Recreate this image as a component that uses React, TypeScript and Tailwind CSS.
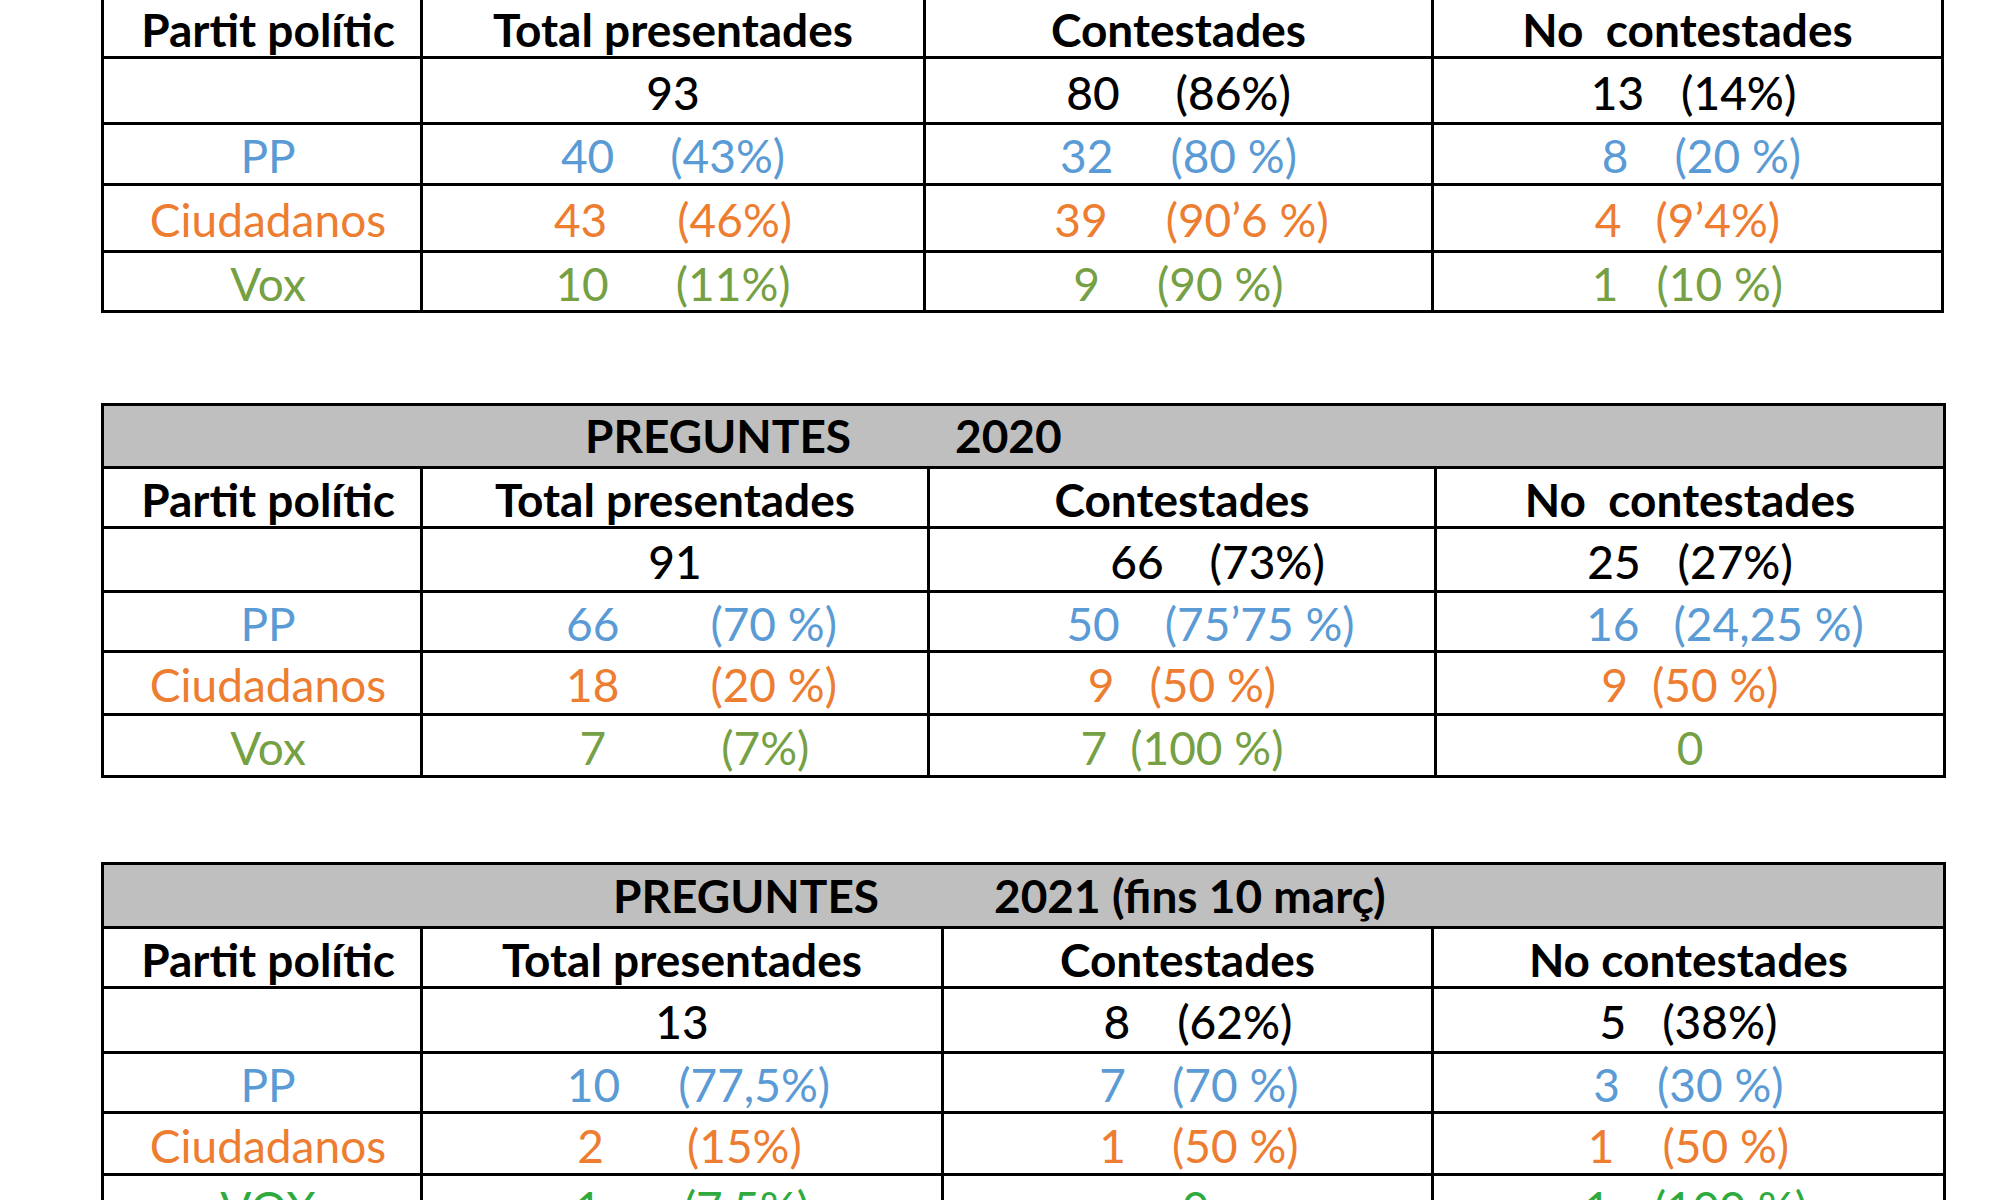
import type { ReactNode } from "react";

type Cell = { num?: string; pct?: string; cls?: string };

type PartyRow = {
  label: string;
  color: string;
  height: string;
  cells: Cell[];
};

type TableSpec = {
  cols: string;
  className: string;
  title?: { left: string; right: string; pad: string; span: string; height: string };
  headers: string[];
  headerHeight: string;
  totals: Cell[];
  totalsHeight: string;
  rows: PartyRow[];
};

const BLUE = "text-[#5b9bd5]";
const ORANGE = "text-[#ed7d31]";
const GREEN = "text-[#76a044]";
const BRIGHT_GREEN = "text-[#2eaa3f]";

const TABLES: TableSpec[] = [
  {
    cols: "grid-cols-[319px_503px_508px_510px]",
    className: "-mt-[4px]",
    headers: ["Partit polític", "Total presentades", "Contestades", "No  contestades"],
    headerHeight: "h-[60px]",
    totals: [
      { num: "93" },
      { num: "80", pct: "(86%)", cls: "gap-[56px]" },
      { num: "13", pct: "(14%)", cls: "gap-[37px] pl-[12px]" },
    ],
    totalsHeight: "h-[66px]",
    rows: [
      {
        label: "PP",
        color: BLUE,
        height: "h-[61px]",
        cells: [
          { num: "40", pct: "(43%)", cls: "gap-[56px]" },
          { num: "32", pct: "(80 %)", cls: "gap-[57px]" },
          { num: "8", pct: "(20 %)", cls: "gap-[46px] pl-[28px]" },
        ],
      },
      {
        label: "Ciudadanos",
        color: ORANGE,
        height: "h-[67px]",
        cells: [
          { num: "43", pct: "(46%)", cls: "gap-[70px]" },
          { num: "39", pct: "(90’6 %)", cls: "gap-[58px] pl-[26px]" },
          { num: "4", pct: "(9’4%)", cls: "gap-[34px]" },
        ],
      },
      {
        label: "Vox",
        color: GREEN,
        height: "h-[60px]",
        cells: [
          { num: "10", pct: "(11%)", cls: "gap-[67px]" },
          { num: "9", pct: "(90 %)", cls: "gap-[57px]" },
          { num: "1", pct: "(10 %)", cls: "gap-[38px]" },
        ],
      },
    ],
  },
  {
    cols: "grid-cols-[319px_507px_507px_509px]",
    className: "mt-[90px]",
    title: {
      left: "PREGUNTES",
      right: "2020",
      pad: "pl-[481px]",
      span: "w-[370px]",
      height: "h-[63px]",
    },
    headers: ["Partit polític", "Total presentades", "Contestades", "No  contestades"],
    headerHeight: "h-[60px]",
    totals: [
      { num: "91" },
      { num: "66", pct: "(73%)", cls: "gap-[46px] pl-[71px]" },
      { num: "25", pct: "(27%)", cls: "gap-[37px]" },
    ],
    totalsHeight: "h-[64px]",
    rows: [
      {
        label: "PP",
        color: BLUE,
        height: "h-[60px]",
        cells: [
          { num: "66", pct: "(70 %)", cls: "gap-[91px] pl-[53px]" },
          { num: "50", pct: "(75’75 %)", cls: "gap-[45px] pl-[57px]" },
          { num: "16", pct: "(24,25 %)", cls: "gap-[34px] pl-[70px]" },
        ],
      },
      {
        label: "Ciudadanos",
        color: ORANGE,
        height: "h-[63px]",
        cells: [
          { num: "18", pct: "(20 %)", cls: "gap-[91px] pl-[53px]" },
          { num: "9", pct: "(50 %)", cls: "gap-[35px]" },
          { num: "9", pct: "(50 %)", cls: "gap-[24px]" },
        ],
      },
      {
        label: "Vox",
        color: GREEN,
        height: "h-[62px]",
        cells: [
          { num: "7", pct: "(7%)", cls: "gap-[115px] pl-[39px]" },
          { num: "7", pct: "(100 %)", cls: "gap-[23px]" },
          { num: "0" },
        ],
      },
    ],
  },
  {
    cols: "grid-cols-[319px_521px_490px_512px]",
    className: "mt-[84px]",
    title: {
      left: "PREGUNTES",
      right: "2021 (fins 10 març)",
      pad: "pl-[509px]",
      span: "w-[381px]",
      height: "h-[64px]",
    },
    headers: ["Partit polític", "Total presentades", "Contestades", "No contestades"],
    headerHeight: "h-[60px]",
    totals: [
      { num: "13" },
      { num: "8", pct: "(62%)", cls: "gap-[47px] pl-[21px]" },
      { num: "5", pct: "(38%)", cls: "gap-[36px]" },
    ],
    totalsHeight: "h-[65px]",
    rows: [
      {
        label: "PP",
        color: BLUE,
        height: "h-[60px]",
        cells: [
          { num: "10", pct: "(77,5%)", cls: "gap-[58px] pl-[33px]" },
          { num: "7", pct: "(70 %)", cls: "gap-[46px] pl-[23px]" },
          { num: "3", pct: "(30 %)", cls: "gap-[37px]" },
        ],
      },
      {
        label: "Ciudadanos",
        color: ORANGE,
        height: "h-[62px]",
        cells: [
          { num: "2", pct: "(15%)", cls: "gap-[83px] pl-[15px]" },
          { num: "1", pct: "(50 %)", cls: "gap-[46px] pl-[23px]" },
          { num: "1", pct: "(50 %)", cls: "gap-[48px]" },
        ],
      },
      {
        label: "VOX",
        color: BRIGHT_GREEN,
        height: "h-[62px]",
        cells: [
          { num: "1", pct: "(7,5%)", cls: "gap-[82px] pl-[20px]" },
          { num: "0", cls: "pl-[16px]" },
          { num: "1", pct: "(100 %)", cls: "gap-[43px] pl-[14px]" },
        ],
      },
    ],
  },
];

function Box({ className, children }: { className: string; children?: ReactNode }) {
  return (
    <div
      className={`flex items-center justify-center border-r-[3px] border-b-[3px] border-black pt-[4px] ${className}`}
    >
      {children}
    </div>
  );
}

function Value({ cell }: { cell: Cell }) {
  return (
    <span className={`flex items-center whitespace-pre ${cell.cls ?? ""}`}>
      <span>{cell.num}</span>
      {cell.pct ? <span>{cell.pct}</span> : null}
    </span>
  );
}

function RowCells({ row }: { row: PartyRow }) {
  return (
    <>
      <Box className={`pl-[12px] ${row.height} ${row.color}`}>{row.label}</Box>
      {row.cells.map((c, i) => (
        <Box key={i} className={`${row.height} ${row.color}`}>
          <Value cell={c} />
        </Box>
      ))}
    </>
  );
}

function StatsTable({ spec }: { spec: TableSpec }) {
  return (
    <div
      className={`grid w-max border-t-[3px] border-l-[3px] border-black ${spec.cols} ${spec.className}`}
    >
      {spec.title ? (
        <div
          className={`col-span-4 flex items-center border-r-[3px] border-b-[3px] border-black bg-[#bfbfbf] font-bold ${spec.title.pad} ${spec.title.height}`}
        >
          <span className={spec.title.span}>{spec.title.left}</span>
          <span>{spec.title.right}</span>
        </div>
      ) : null}

      {spec.headers.map((h, i) => (
        <Box
          key={h + i}
          className={`whitespace-pre font-bold ${spec.headerHeight} ${i === 0 ? "pl-[12px]" : ""}`}
        >
          {h}
        </Box>
      ))}

      <Box className={spec.totalsHeight} />
      {spec.totals.map((c, i) => (
        <Box key={i} className={`font-medium ${spec.totalsHeight}`}>
          <Value cell={c} />
        </Box>
      ))}

      {spec.rows.map((row) => (
        <RowCells key={row.label} row={row} />
      ))}
    </div>
  );
}

export default function App() {
  return (
    <div className="h-[1200px] w-[2000px] overflow-hidden bg-white pl-[101px] font-['Lato','Liberation_Sans',sans-serif] text-[46px] leading-none text-black">
      {TABLES.map((t, i) => (
        <StatsTable key={i} spec={t} />
      ))}
    </div>
  );
}
